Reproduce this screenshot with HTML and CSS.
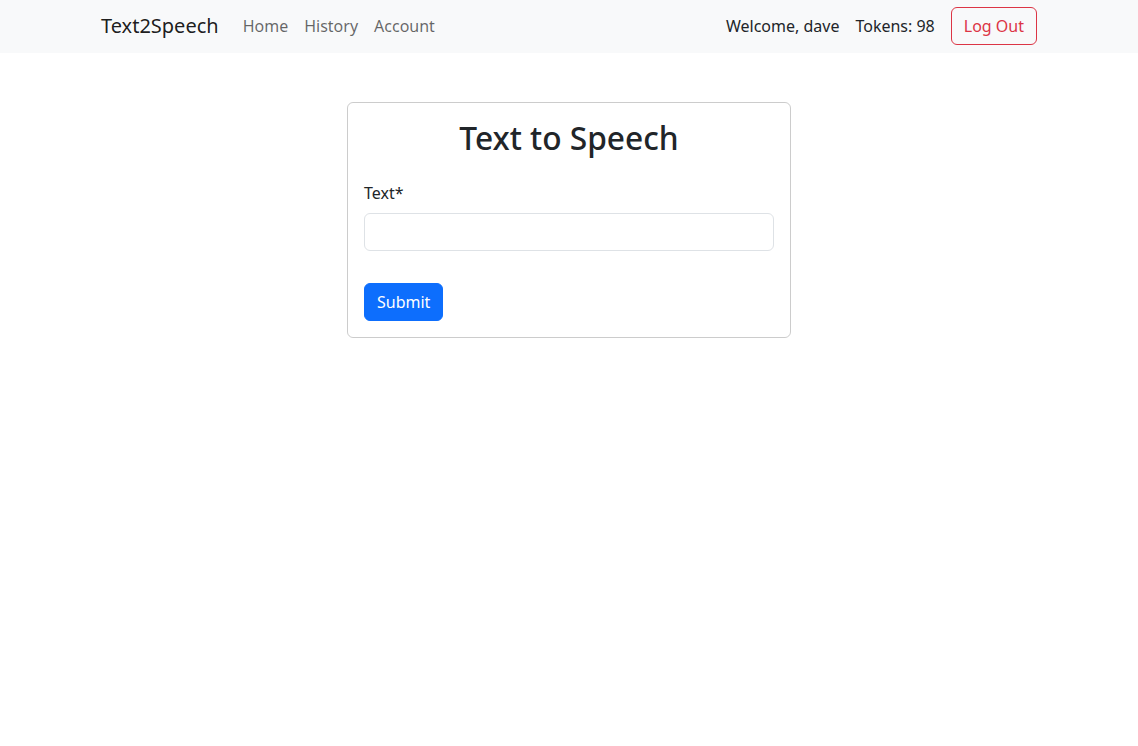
FILE: index.html
```html
<!DOCTYPE html>
<html lang="en">
<head>
<meta charset="utf-8">
<title>Text2Speech</title>
<link rel="stylesheet" href="styles.css">
</head>
<body>
<nav class="navbar">
  <div class="container nav-inner">
    <div class="nav-left">
      <a class="brand" href="#">Text2Speech</a>
      <ul class="nav-links">
        <li><a href="#">Home</a></li>
        <li><a href="#">History</a></li>
        <li><a href="#">Account</a></li>
      </ul>
    </div>
    <div class="nav-right">
      <span class="nav-text">Welcome, dave</span>
      <span class="nav-text">Tokens: 98</span>
      <button class="btn-logout" type="button">Log Out</button>
    </div>
  </div>
</nav>
<main class="main">
  <div class="card">
    <h2 class="card-title">Text to Speech</h2>
    <form class="form">
      <label class="form-label" for="text">Text*</label>
      <input class="form-control" id="text" type="text">
      <button class="btn-submit" type="submit">Submit</button>
    </form>
  </div>
</main>
</body>
</html>
```

FILE: styles.css
```css
* { box-sizing: border-box; }
html, body { margin: 0; padding: 0; }
body {
  font-family: "Noto Sans", "Liberation Sans", sans-serif;
  font-size: 16px;
  line-height: 1.5;
  color: #212529;
  background: #fff;
}
a { text-decoration: none; }

.navbar {
  background: #f8f9fa;
  padding: 7px 0 8px;
}
.container {
  max-width: 960px;
  margin: 0 auto;
  padding: 0 12px;
}
.nav-inner {
  display: flex;
  align-items: center;
  justify-content: space-between;
  height: 38px;
}
.nav-left, .nav-right {
  display: flex;
  align-items: center;
}
.brand {
  font-size: 20px;
  line-height: 30px;
  color: rgba(0,0,0,.9);
  margin-right: 16px;
}
.nav-links {
  display: flex;
  list-style: none;
  margin: 0;
  padding: 0;
}
.nav-links a {
  display: block;
  padding: 0 8px;
  color: rgba(0,0,0,.6);
}
.nav-right { gap: 16px; }
.nav-text { color: #212529; }
.btn-logout {
  font-family: inherit;
  font-size: 16px;
  line-height: 24px;
  height: 38px;
  padding: 6px 12px;
  color: #dc3545;
  background: transparent;
  border: 1px solid #dc3545;
  border-radius: 6px;
}

.main {
  display: flex;
  justify-content: center;
  padding-top: 49px;
}
.card {
  width: 444px;
  border: 1px solid rgba(0,0,0,.2);
  border-radius: 6px;
  padding: 16px;
}
.card-title {
  margin: 0 0 24px;
  font-size: 31.7px;
  font-weight: 500;
  line-height: 38px;
  text-align: center;
}
.form { display: flex; flex-direction: column; align-items: flex-start; }
.form-label { margin-bottom: 8px; }
.form-control {
  width: 100%;
  height: 38px;
  padding: 6px 12px;
  font-family: inherit;
  font-size: 16px;
  border: 1px solid #dee2e6;
  border-radius: 6px;
  margin-bottom: 32px;
}
.btn-submit {
  font-family: inherit;
  font-size: 16px;
  line-height: 24px;
  height: 38px;
  padding: 6px 12px;
  color: #fff;
  background: #0d6efd;
  border: 1px solid #0d6efd;
  border-radius: 6px;
}
```
